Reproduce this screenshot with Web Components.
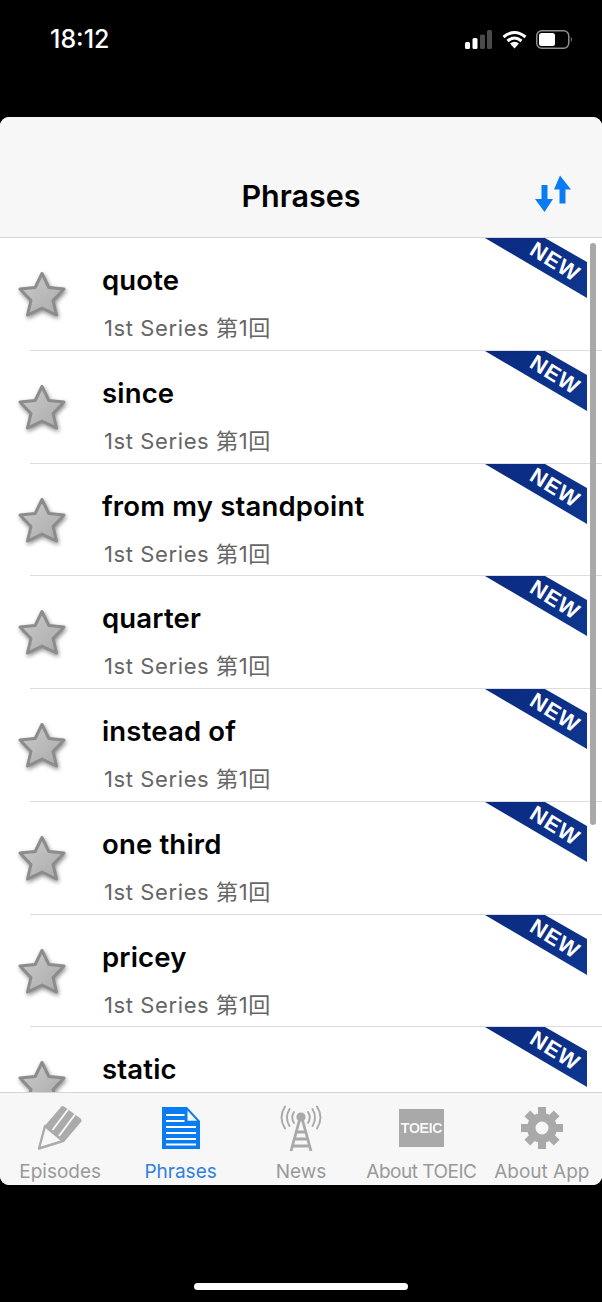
<!DOCTYPE html>
<html>
<head>
<meta charset="utf-8">
<title>Phrases</title>
<style>
  html, body { margin: 0; padding: 0; background: #000; }
  body { width: 602px; height: 1302px; overflow: hidden; font-family: Inter, "Noto Sans CJK JP", sans-serif; }
</style>
</head>
<body>
<phone-screen>
  <status-bar slot="status" time="18:12"></status-bar>
  <nav-header slot="header" title="Phrases"></nav-header>
  <phrase-list slot="content">
    <phrase-row phrase="quote" episode="1st Series 第1回"></phrase-row>
    <phrase-row phrase="since" episode="1st Series 第1回"></phrase-row>
    <phrase-row phrase="from my standpoint" episode="1st Series 第1回"></phrase-row>
    <phrase-row phrase="quarter" episode="1st Series 第1回"></phrase-row>
    <phrase-row phrase="instead of" episode="1st Series 第1回"></phrase-row>
    <phrase-row phrase="one third" episode="1st Series 第1回"></phrase-row>
    <phrase-row phrase="pricey" episode="1st Series 第1回"></phrase-row>
    <!-- last row runs under the tab bar, its second line is not visible -->
    <phrase-row phrase="static"></phrase-row>
  </phrase-list>
  <tab-bar slot="tabs">
    <tab-item label="Episodes" icon="pencil"></tab-item>
    <tab-item label="Phrases" icon="doc" active></tab-item>
    <tab-item label="News" icon="tower"></tab-item>
    <tab-item label="About TOEIC" icon="toeic" tight></tab-item>
    <tab-item label="About App" icon="gear"></tab-item>
  </tab-bar>
</phone-screen>

<script>
const ICONS = {
  pencil: `<svg width="46" height="46" viewBox="0 0 46 46">
    <path fill="#f7f7f7" stroke="#ababab" stroke-width="2.400" stroke-linejoin="round" d="M8 21 2 43.500 26 36Z"/>
    <path fill="#ababab" d="M24 2Q25 .5 27 1.500L43 13Q45.500 15 44 17L27 37 23.500 32.500 19.500 31 16.500 27 12 25.500 8 20.500Z"/>
    <path stroke="#f7f7f7" stroke-width="1.900" fill="none" d="M31 4.500 15.500 25M38 9.500 22 31"/>
  </svg>`,
  doc: `<svg width="38" height="42" viewBox="0 0 38 42">
    <path fill="#0a7cf2" d="M0 0H25L38 14V42H0Z"/>
    <path fill="#f7f7f7" d="M25.500 3.500 35 13.800H25.500Z"/>
    <path stroke="#fff" stroke-width="2.200" fill="none" d="M4 8H22.500M4 14H22.500M4 20H34M4 26H34M4 32H34M4 37.500H34"/>
  </svg>`,
  tower: `<svg width="48" height="48" viewBox="0 0 48 48" fill="none" stroke="#a9a9a9" stroke-linecap="round">
    <g stroke-width="1.900">
      <path d="M17 8Q13.500 13.500 17 19M12.500 5Q7.500 13.500 12.500 22M8 2.500Q1 13.500 8 24.500"/>
      <path d="M31 8Q34.500 13.500 31 19M35.500 5Q40.500 13.500 35.500 22M40 2.500Q47 13.500 40 24.500"/>
    </g>
    <circle cx="24" cy="13" r="4.600" fill="#a9a9a9" stroke="none"/>
    <path stroke-width="2.800" stroke-linecap="butt" d="M22.500 16 14 47M25.500 16 34 47M19 28H29M17 35H31M15 42H33"/>
  </svg>`,
  toeic: `<div class="toeic"><span>TOEIC</span></div>`,
  gear: `<svg width="42" height="42" viewBox="0 0 42 42">
    <g fill="#a9a9a9">
      <path d="M17 0H25V8H17Z"/>
      <path d="M17 34H25V42H17Z"/>
      <path d="M0 17H8V25H0Z"/>
      <path d="M34 17H42V25H34Z"/>
      <path d="M3.500 9.200 9.200 3.500 15 9.300 9.300 15Z"/>
      <path d="M32.800 3.500 38.500 9.200 32.700 15 27 9.300Z"/>
      <path d="M3.500 32.800 9.300 27 15 32.700 9.200 38.500Z"/>
      <path d="M27 32.700 32.700 27 38.500 32.800 32.800 38.500Z"/>
      <path fill-rule="evenodd" d="M21 6A15 15 0 1 1 21 36 15 15 0 1 1 21 6ZM21 14.500A6.500 6.500 0 1 0 21 27.500 6.500 6.500 0 1 0 21 14.500Z"/>
    </g>
  </svg>`
}

customElements.define('phone-screen', class extends HTMLElement {
  constructor () {
    super()
    this.attachShadow({ mode: 'open' }).innerHTML = `
      <style>
        :host { display: flex; flex-direction: column; width: 602px; height: 1302px; background: #000; }
        .card { display: flex; flex-direction: column; height: 1068px; border-radius: 9px; overflow: hidden; background: #fff; }
        .middle { flex: 1; min-height: 0; display: flex; }
        .home { flex: 1; display: flex; justify-content: center; align-items: flex-end; padding-bottom: 12px; }
        .home i { display: block; width: 214px; height: 7px; border-radius: 4px; background: #fff; }
      </style>
      <slot name="status"></slot>
      <div class="card">
        <slot name="header"></slot>
        <div class="middle"><slot name="content"></slot></div>
        <slot name="tabs"></slot>
      </div>
      <div class="home"><i></i></div>
    `
  }
})

customElements.define('status-bar', class extends HTMLElement {
  constructor () {
    super()
    this.attachShadow({ mode: 'open' }).innerHTML = `
      <style>
        :host { display: flex; box-sizing: border-box; height: 117px; padding: 25px 29px 0 50px; justify-content: space-between; align-items: flex-start; color: #fff; font: 500 25px/28px Inter, sans-serif; }
        .icons { display: flex; align-items: center; gap: 9px; height: 28px; }
      </style>
      <span class="time"></span>
      <div class="icons">
        <svg width="28" height="19" viewBox="0 0 28 19">
          <rect x="0" y="12" width="5" height="7" rx="1.500" fill="#fff"/>
          <rect x="7.500" y="8" width="5" height="11" rx="1.500" fill="#fff"/>
          <rect x="15" y="4.500" width="5" height="14.500" rx="1.500" fill="#4a4a4a"/>
          <rect x="22" y="0" width="5" height="19" rx="1.500" fill="#4a4a4a"/>
        </svg>
        <svg width="25" height="19" viewBox="0 0 25 19" fill="none" stroke="#fff" stroke-width="3">
          <path d="M1.500 7Q12.500 -2 23.500 7M5.500 11Q12.500 5 19.500 11M9 14.500Q12.500 12 16 14.500"/>
          <path d="M9.800 15.500 12.500 18.500 15.200 15.500Q12.500 13.500 9.800 15.500Z" fill="#fff" stroke="none"/>
        </svg>
        <svg width="37" height="19" viewBox="0 0 37 19">
          <rect x=".75" y=".75" width="32" height="17.500" rx="5" fill="none" stroke="#8e8e8e" stroke-width="1.500"/>
          <rect x="3" y="3" width="16" height="13" rx="2.500" fill="#fff"/>
          <path d="M34.800 6.500Q36.800 9.500 34.800 12.500Z" fill="#8e8e8e"/>
        </svg>
      </div>
    `
    this.shadowRoot.querySelector('.time').textContent = this.getAttribute('time')
  }
})

customElements.define('nav-header', class extends HTMLElement {
  constructor () {
    super()
    this.attachShadow({ mode: 'open' }).innerHTML = `
      <style>
        :host { display: flex; flex: none; box-sizing: border-box; height: 121px; padding: 56px 29px 0 29px; background: #f7f7f7; border-bottom: 1px solid #d5d5d7; position: relative; }
        h1 { flex: 1; margin: 0; text-align: center; font: 600 30.500px/46px Inter, sans-serif; color: #000; }
        svg { position: absolute; right: 30px; top: 58px; }
      </style>
      <h1></h1>
      <svg width="37" height="38" viewBox="0 0 37 38" fill="#0a7cf2">
        <path d="M25.500 0 36.500 14H31V28H25V14H19.500Z" transform="translate(-.500 .500)"/>
        <path d="M6.500 10H12.500V24H18L9.500 37 0 24H6.500Z"/>
      </svg>
    `
    this.shadowRoot.querySelector('h1').textContent = this.getAttribute('title')
  }
})

customElements.define('phrase-list', class extends HTMLElement {
  constructor () {
    super()
    this.attachShadow({ mode: 'open' }).innerHTML = `
      <style>
        :host { display: block; flex: 1; position: relative; overflow: hidden; background: #fff; }
        .thumb { position: absolute; right: 6px; top: 5px; width: 6px; height: 582px; border-radius: 3px; background: #a9a9a9; }
      </style>
      <slot></slot>
      <div class="thumb"></div>
    `
  }
})

customElements.define('phrase-row', class extends HTMLElement {
  constructor () {
    super()
    this.attachShadow({ mode: 'open' }).innerHTML = `
      <style>
        :host { display: flex; box-sizing: border-box; height: 112.75px; position: relative; padding-left: 18px; }
        :host::after { content: ""; position: absolute; left: 30px; right: 0; bottom: 0; height: 1px; background: #dcdcde; }
        .star { flex: none; width: 48px; height: 48px; margin-top: 33px; filter: drop-shadow(1px 2px 2px rgba(0,0,0,.45)); }
        .text { margin-left: 36px; display: flex; flex-direction: column; }
        .phrase { font: 600 27.500px/32px Inter, sans-serif; letter-spacing: .17px; color: #000; margin-top: 26px; }
        .episode { font: 400 22px/26px Inter, "Noto Sans CJK JP", sans-serif; letter-spacing: .6px; color: #666; margin: 19px 0 0 2px; }
        .ribbon { position: absolute; top: 0; right: 15px; width: 102px; height: 60px; }
        .new { position: absolute; top: 12px; left: 39px; width: 62px; text-align: center; color: #fff; font: 700 22px/24px "Liberation Sans", sans-serif; letter-spacing: 1px; transform: rotate(32deg); transform-origin: center; }
      </style>
      <svg class="star" viewBox="0 0 48 48">
        <defs><linearGradient id="g" x1="0" y1="0" x2="1" y2="1"><stop offset="0" stop-color="#cbcbcb"/><stop offset="1" stop-color="#aaa"/></linearGradient></defs>
        <path fill="url(#g)" stroke="#8c8c8c" stroke-width="3" stroke-linejoin="round" d="M24 2.500 30.800 16.500 46 18 35 29.500 38.500 44 24 37 9.500 44 13 29.500 2 18 17.200 16.500Z"/>
      </svg>
      <div class="text"><span class="phrase"></span><span class="episode"></span></div>
      <div class="ribbon">
        <svg width="102" height="60" viewBox="0 0 102 60">
          <defs><linearGradient id="r" x1="0" y1="0" x2="1" y2="1"><stop offset="0" stop-color="#0a2a80"/><stop offset="1" stop-color="#0e3790"/></linearGradient></defs>
          <path fill="url(#r)" d="M0 0H60L102 24V60Z"/>
        </svg>
        <div class="new">NEW</div>
      </div>
    `
    this.shadowRoot.querySelector('.phrase').textContent = this.getAttribute('phrase')
    this.shadowRoot.querySelector('.episode').textContent = this.getAttribute('episode') || ''
  }
})

customElements.define('tab-bar', class extends HTMLElement {
  constructor () {
    super()
    this.attachShadow({ mode: 'open' }).innerHTML = `
      <style>
        :host { display: grid; flex: none; grid-template-columns: repeat(5, 1fr); box-sizing: border-box; height: 93px; padding: 0; background: #f7f7f7; border-top: 1px solid #d5d5d7; }
      </style>
      <slot></slot>
    `
  }
})

customElements.define('tab-item', class extends HTMLElement {
  constructor () {
    super()
    const active = this.hasAttribute('active')
    const tight = this.hasAttribute('tight')
    this.attachShadow({ mode: 'open' }).innerHTML = `
      <style>
        :host { display: flex; flex-direction: column; align-items: center; color: ${active ? '#2f80e0' : '#9a9a9a'}; }
        .icon { height: 67px; display: flex; align-items: center; justify-content: center; padding-top: 3px; box-sizing: border-box; }
        .label { font: 400 19px/24px Inter, sans-serif; white-space: nowrap; letter-spacing: ${tight ? '-.5px' : '0'}; }
        .toeic { width: 45px; height: 38px; background: #a9a9a9; color: #f7f7f7; font: 700 15.500px/38px "Liberation Sans", sans-serif; display: flex; justify-content: center; letter-spacing: -.4px; }
        .toeic span { display: block; flex: none; transform: scaleX(.92); }
      </style>
      <div class="icon">${ICONS[this.getAttribute('icon')]}</div>
      <div class="label"></div>
    `
    this.shadowRoot.querySelector('.label').textContent = this.getAttribute('label')
  }
})
</script>
</body>
</html>
